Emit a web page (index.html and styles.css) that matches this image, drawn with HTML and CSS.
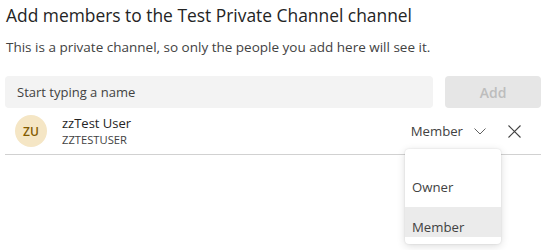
FILE: index.html
```html
<!DOCTYPE html>
<html lang="en">
<head>
<meta charset="utf-8">
<title>Add members</title>
<link rel="stylesheet" href="styles.css">
</head>
<body>
<div class="dialog">
  <h1 class="title">Add members to the Test Private Channel channel</h1>
  <p class="subtitle">This is a private channel, so only the people you add here will see it.</p>
  <div class="search-row">
    <div class="input">Start typing a name</div>
    <button class="add-btn" disabled>Add</button>
  </div>
  <div class="member-row">
    <div class="avatar">ZU</div>
    <div class="names">
      <div class="name">zzTest User</div>
      <div class="upn">ZZTESTUSER</div>
    </div>
    <div class="role">
      <span class="role-label">Member</span>
      <svg class="chev" width="12" height="7" viewBox="0 0 12 7"><path d="M0.5 0.5 L6 6 L11.5 0.5" fill="none" stroke="#616161" stroke-width="1"/></svg>
    </div>
    <svg class="close" width="13" height="13" viewBox="0 0 13 13"><path d="M0.5 0.5 L12.5 12.5 M12.5 0.5 L0.5 12.5" fill="none" stroke="#424242" stroke-width="1.1"/></svg>
    <div class="menu">
      <div class="menu-item">Owner</div>
      <div class="menu-item selected">Member</div>
    </div>
  </div>
</div>
</body>
</html>
```
FILE: styles.css
```css
html, body {
  margin: 0;
  padding: 0;
  background: #ffffff;
  min-height: 250px;
}
body {
  font-family: "Segoe UI", "Open Sans", "Noto Sans", sans-serif;
  color: #242424;
}
.dialog {
  width: 536px;
  min-height: 250px;
  padding: 0 0 0 5px;
}
.title {
  margin: 0;
  padding-top: 3px;
  padding-left: 1px;
  font-size: 17.4px;
  font-weight: 400;
  line-height: 24px;
  color: #242424;
}
.subtitle {
  margin: 0;
  padding-top: 11px;
  padding-left: 1px;
  font-size: 13.5px;
  line-height: 18px;
  color: #424242;
}
.search-row {
  display: flex;
  gap: 12px;
  margin-top: 20px;
  height: 32px;
}
.input {
  flex: 1;
  background: #f3f3f3;
  border-radius: 4px;
  padding-left: 12px;
  font-size: 13px;
  line-height: 32px;
  color: #424242;
}
.add-btn {
  width: 96px;
  border: none;
  border-radius: 4px;
  background: #e6e6e6;
  color: #bdbdbd;
  font-family: inherit;
  font-size: 14px;
  font-weight: 600;
  padding: 0;
}
.member-row {
  position: relative;
  display: flex;
  align-items: center;
  height: 46px;
  border-bottom: 1px solid #d1d1d1;
}
.avatar {
  width: 32px;
  height: 32px;
  margin-left: 10px;
  border-radius: 50%;
  background: #f5e6c5;
  color: #835b00;
  font-size: 12px;
  font-weight: 600;
  display: flex;
  align-items: center;
  justify-content: center;
}
.names {
  margin-left: 15px;
  flex: 1;
}
.name {
  font-size: 13px;
  line-height: 17px;
  color: #242424;
}
.upn {
  font-size: 11.2px;
  line-height: 15px;
  color: #424242;
}
.role {
  display: flex;
  align-items: center;
  gap: 11px;
}
.role-label {
  font-size: 13.2px;
  color: #424242;
}
.close {
  margin-left: 22px;
  margin-right: 20px;
}
.menu {
  position: absolute;
  left: 400px;
  top: 41px;
  width: 96px;
  padding: 18px 0 7px;
  background: #ffffff;
  border-radius: 4px;
  box-shadow: 0 2px 8px rgba(0,0,0,0.14), 0 0 2px rgba(0,0,0,0.12);
  z-index: 2;
}
.menu-item {
  height: 40px;
  line-height: 40px;
  padding-left: 7px;
  font-size: 13.2px;
  color: #424242;
}
.menu-item.selected {
  height: 30px;
  overflow: hidden;
  background: #ebebeb;
}
```
